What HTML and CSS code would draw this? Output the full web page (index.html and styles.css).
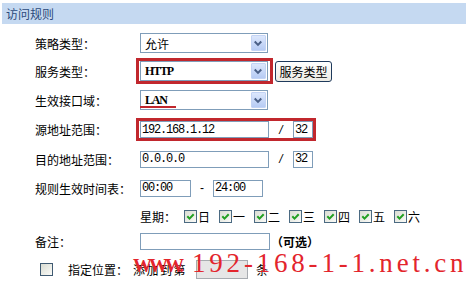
FILE: index.html
```html
<!DOCTYPE html>
<html lang="zh-CN">
<head>
<meta charset="utf-8">
<title>访问规则</title>
<link rel="stylesheet" href="styles.css">
</head>
<body>
<div class="panel">
  <div class="title">访问规则</div>
  <div class="form">
    <div class="label">策略类型：</div>
    <div class="ctrl">
      <div class="select"><span class="val">允许</span><span class="arrow"><svg viewBox="0 0 15 16" width="15" height="16"><polyline points="4,6.5 7.5,10 11,6.5" fill="none" stroke="#4a5f86" stroke-width="2.2"/></svg></span></div>
    </div>

    <div class="label">服务类型：</div>
    <div class="ctrl">
      <div class="mark mark-sel">
        <div class="select"><span class="val latin">HTTP</span><span class="arrow"><svg viewBox="0 0 15 16" width="15" height="16"><polyline points="4,6.5 7.5,10 11,6.5" fill="none" stroke="#4a5f86" stroke-width="2.2"/></svg></span></div>
      </div>
      <button class="btn" type="button">服务类型</button>
    </div>

    <div class="label">生效接口域：</div>
    <div class="ctrl">
      <div class="select"><span class="val latin">LAN</span><span class="arrow"><svg viewBox="0 0 15 16" width="15" height="16"><polyline points="4,6.5 7.5,10 11,6.5" fill="none" stroke="#4a5f86" stroke-width="2.2"/></svg></span><span class="underline"></span></div>
    </div>

    <div class="label">源地址范围：</div>
    <div class="ctrl">
      <div class="mark mark-ip">
        <input class="txt ip" type="text" value="192.168.1.12"><span class="sep">/</span><input class="txt mask" type="text" value="32">
      </div>
    </div>

    <div class="label">目的地址范围：</div>
    <div class="ctrl">
      <input class="txt ip" type="text" value="0.0.0.0"><span class="sep">/</span><input class="txt mask" type="text" value="32">
    </div>

    <div class="label">规则生效时间表：</div>
    <div class="ctrl">
      <input class="txt time" type="text" value="00:00"><span class="dash">-</span><input class="txt time2" type="text" value="24:00">
    </div>

    <div class="label"></div>
    <div class="ctrl week">
      <span class="wk">星期：</span>
      <span class="day"><span class="cb"><svg viewBox="0 0 11 11" width="11" height="11"><polyline points="2.3,5.3 4.5,7.6 8.7,3.2" fill="none" stroke="#22a022" stroke-width="2"/></svg></span>日</span>
      <span class="day"><span class="cb"><svg viewBox="0 0 11 11" width="11" height="11"><polyline points="2.3,5.3 4.5,7.6 8.7,3.2" fill="none" stroke="#22a022" stroke-width="2"/></svg></span>一</span>
      <span class="day"><span class="cb"><svg viewBox="0 0 11 11" width="11" height="11"><polyline points="2.3,5.3 4.5,7.6 8.7,3.2" fill="none" stroke="#22a022" stroke-width="2"/></svg></span>二</span>
      <span class="day"><span class="cb"><svg viewBox="0 0 11 11" width="11" height="11"><polyline points="2.3,5.3 4.5,7.6 8.7,3.2" fill="none" stroke="#22a022" stroke-width="2"/></svg></span>三</span>
      <span class="day"><span class="cb"><svg viewBox="0 0 11 11" width="11" height="11"><polyline points="2.3,5.3 4.5,7.6 8.7,3.2" fill="none" stroke="#22a022" stroke-width="2"/></svg></span>四</span>
      <span class="day"><span class="cb"><svg viewBox="0 0 11 11" width="11" height="11"><polyline points="2.3,5.3 4.5,7.6 8.7,3.2" fill="none" stroke="#22a022" stroke-width="2"/></svg></span>五</span>
      <span class="day"><span class="cb"><svg viewBox="0 0 11 11" width="11" height="11"><polyline points="2.3,5.3 4.5,7.6 8.7,3.2" fill="none" stroke="#22a022" stroke-width="2"/></svg></span>六</span>
    </div>

    <div class="label">备注：</div>
    <div class="ctrl">
      <input class="txt note" type="text" value=""><span class="opt">（可选）</span>
    </div>

    <div class="pos-row">
      <span class="cb cb-empty"></span>
      <span class="pos-label">指定位置：</span>
      <span class="pos-add">添加到第</span>
      <input class="txt num" type="text" value="" disabled>
      <span class="pos-unit">条</span>
    </div>
  </div>

  <div class="watermark"><span class="www">WWW.</span><span class="url">192-168-1-1.net.cn</span></div>
</div>
</body>
</html>
```

FILE: styles.css
```css
html, body {
  margin: 0;
  padding: 0;
  overflow: hidden;
  background: #ffffff;
}

body {
  font-family: "Noto Sans CJK SC", "Liberation Sans", sans-serif;
  font-size: 12px;
  color: #000;
}

.panel {
  position: relative;
  padding: 3px 0 0 2px;
}

.title {
  height: 21px;
  line-height: 21px;
  padding-left: 4px;
  background: #c5d9f1;
  color: #2b4a7b;
  font-size: 12px;
}

.form {
  display: grid;
  grid-template-columns: 105px 1fr;
  grid-template-rows: 28px 28px 30px 29px 30px 28px 28px 22px 34px;
  align-items: center;
  margin-top: 5px;
  padding-left: 33px;
}

.label {
  white-space: nowrap;
}

.ctrl {
  display: flex;
  align-items: center;
}

/* select look-alike */
.select {
  position: relative;
  display: flex;
  align-items: center;
  box-sizing: border-box;
  width: 128px;
  height: 20px;
  border: 1px solid #7f9db9;
  background: #fff;
}

.val {
  flex: 1;
  padding-left: 4px;
  white-space: nowrap;
}

.latin {
  font-family: "Liberation Serif", serif;
  font-weight: bold;
  letter-spacing: -1.2px;
  font-size: 12px;
}

.arrow {
  display: flex;
  box-sizing: border-box;
  width: 15px;
  height: 16px;
  margin-right: 1px;
  border: 1px solid #c3d3f4;
  border-radius: 1px;
  background: linear-gradient(#dce7fc, #b6cbf4);
}

.arrow svg {
  display: block;
  margin: -1px 0 0 -1px;
}

.underline {
  position: absolute;
  left: -1px;
  bottom: 1px;
  width: 36px;
  height: 2px;
  background: #c1272d;
}

/* red highlight frames */
.mark {
  display: flex;
  align-items: center;
  border: 3px solid #c1272d;
  margin-left: -4px;
}

.mark-sel {
  padding: 0 2px 0 1px;
}

.mark-ip {
  padding: 0 0 0 1px;
}

.btn {
  box-sizing: border-box;
  height: 21px;
  width: 57px;
  margin-left: 2px;
  padding: 0;
  border: 1px solid #1f3a5c;
  border-radius: 3px;
  background: linear-gradient(#ffffff, #ecebe4);
  font-family: "Noto Sans CJK SC", sans-serif;
  font-size: 12px;
  color: #000;
}

/* text inputs */
.txt {
  box-sizing: border-box;
  height: 17px;
  margin: 0;
  padding: 0 1px;
  border: 1px solid #7f9db9;
  background: #fff;
  font-family: "Liberation Mono", monospace;
  font-size: 12px;
  letter-spacing: -1.2px;
  color: #000;
  outline: none;
}

.ip { width: 129px; }
.mask { width: 20px; }
.time { width: 51px; }
.time2 { width: 50px; }
.note { width: 130px; }

.sep {
  width: 24px;
  text-align: center;
  font-family: "Liberation Sans", sans-serif;
  font-style: italic;
}

.dash {
  width: 22px;
  text-align: center;
  font-family: "Liberation Sans", sans-serif;
}

.opt {
  margin-left: 1px;
  font-weight: bold;
}

/* weekdays */
.week .wk {
  margin-right: 8px;
}

.day {
  display: flex;
  align-items: center;
  gap: 1px;
  margin-right: 9px;
}

.cb {
  display: flex;
  align-items: center;
  justify-content: center;
  box-sizing: border-box;
  width: 13px;
  height: 13px;
  border: 1px solid #4b6a82;
  background: linear-gradient(135deg, #d9dcd2, #fbfbf8);
}

/* last row */
.pos-row {
  grid-column: 1 / -1;
  display: flex;
  align-items: center;
  margin-left: 5px;
}

.cb-empty {
  margin-right: 15px;
  border-color: #3f5a72;
}

.pos-add {
  margin-left: 5px;
  letter-spacing: 1.5px;
}

.num {
  width: 52px;
  height: 19px;
  margin-left: 9px;
  background: #e6e6e6;
  border: 1px solid #a7abb0;
}

.pos-unit {
  margin-left: 8px;
}

/* watermark overlay */
.watermark {
  position: absolute;
  left: 133px;
  top: 250px;
  display: flex;
  align-items: baseline;
  line-height: 26px;
  color: #e3252c;
  font-family: "Liberation Serif", serif;
  white-space: nowrap;
}

.www {
  font-size: 19px;
  font-weight: bold;
  letter-spacing: -3px;
}

.url {
  margin-left: 11px;
  font-size: 27px;
  letter-spacing: 3.8px;
}
```
